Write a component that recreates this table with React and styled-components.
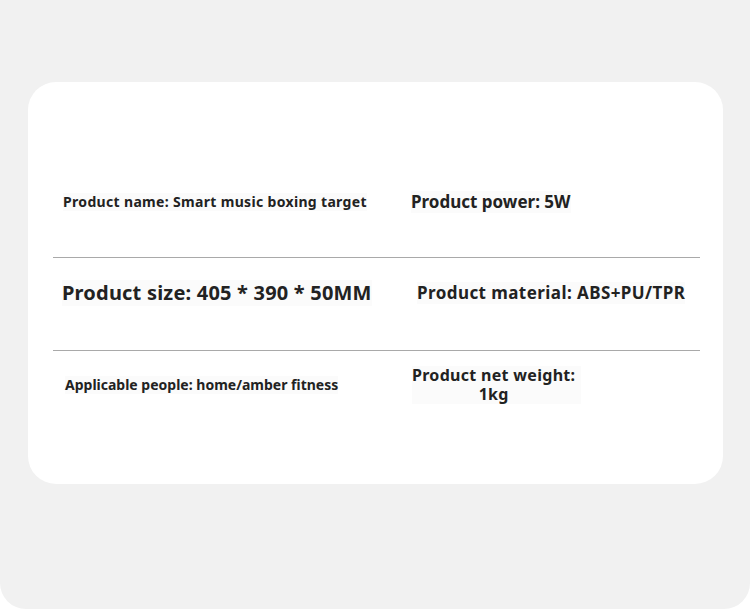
import React from "react";
import styled, { createGlobalStyle } from "styled-components";

const Global = createGlobalStyle`
  html, body { margin: 0; padding: 0; background: #ffffff; }
  body { font-family: "Noto Sans", "Open Sans", sans-serif; }
`;

const Page = styled.div`
  width: 750px;
  height: 609px;
  box-sizing: border-box;
  background: #f1f1f1;
  border-radius: 0 0 26px 26px;
  padding: 82px 27px 0 28px;
`;

const Card = styled.div`
  height: 402px;
  box-sizing: border-box;
  background: #ffffff;
  border-radius: 28px;
  padding: 0 23px 0 25px;
`;

const Row = styled.div`
  display: grid;
  grid-template-columns: 348px 1fr;
  align-items: center;
  height: ${(p) => p.$h}px;
  padding-top: ${(p) => p.$top}px;
  padding-bottom: ${(p) => p.$bottom || 0}px;
  border-top: ${(p) => (p.$line ? "1px solid #a9a9a9" : "none")};
`;

const Cell = styled.div`
  padding-left: ${(p) => p.$indent}px;
  display: flex;
  justify-content: flex-start;
`;

const Label = styled.span`
  font-weight: 700;
  color: #222222;
  font-size: ${(p) => p.$size}px;
  line-height: 1.3;
  letter-spacing: ${(p) => p.$ls || 0}px;
  background: #fbfbfb;
  white-space: nowrap;
`;

const Stack = styled.div`
  display: flex;
  flex-direction: column;
  align-items: center;
  background: #fbfbfb;
  padding-right: 6px;
`;

const StackLine = styled.span`
  font-weight: 700;
  color: #222222;
  font-size: 16px;
  line-height: 19px;
  letter-spacing: 0.3px;
  white-space: nowrap;
`;

export default function App() {
  return (
    <>
      <Global />
      <Page>
        <Card>
          <Row $h={40} $top={100} $bottom={35}>
            <Cell $indent={10}>
              <Label $size={14} $ls={0.33}>Product name: Smart music boxing target</Label>
            </Cell>
            <Cell $indent={10}>
              <Label $size={17}>Product power: 5W</Label>
            </Cell>
          </Row>
          <Row $line $h={40} $top={15} $bottom={37}>
            <Cell $indent={9}>
              <Label $size={20} $ls={0.2}>Product size: 405 * 390 * 50MM</Label>
            </Cell>
            <Cell $indent={16}>
              <Label $size={17} $ls={0.43}>Product material: ABS+PU/TPR</Label>
            </Cell>
          </Row>
          <Row $line $h={40} $top={14}>
            <Cell $indent={12}>
              <Label $size={14}>Applicable people: home/amber fitness</Label>
            </Cell>
            <Cell $indent={11}>
              <Stack>
                <StackLine>Product net weight:</StackLine>
                <StackLine>1kg</StackLine>
              </Stack>
            </Cell>
          </Row>
        </Card>
      </Page>
    </>
  );
}
